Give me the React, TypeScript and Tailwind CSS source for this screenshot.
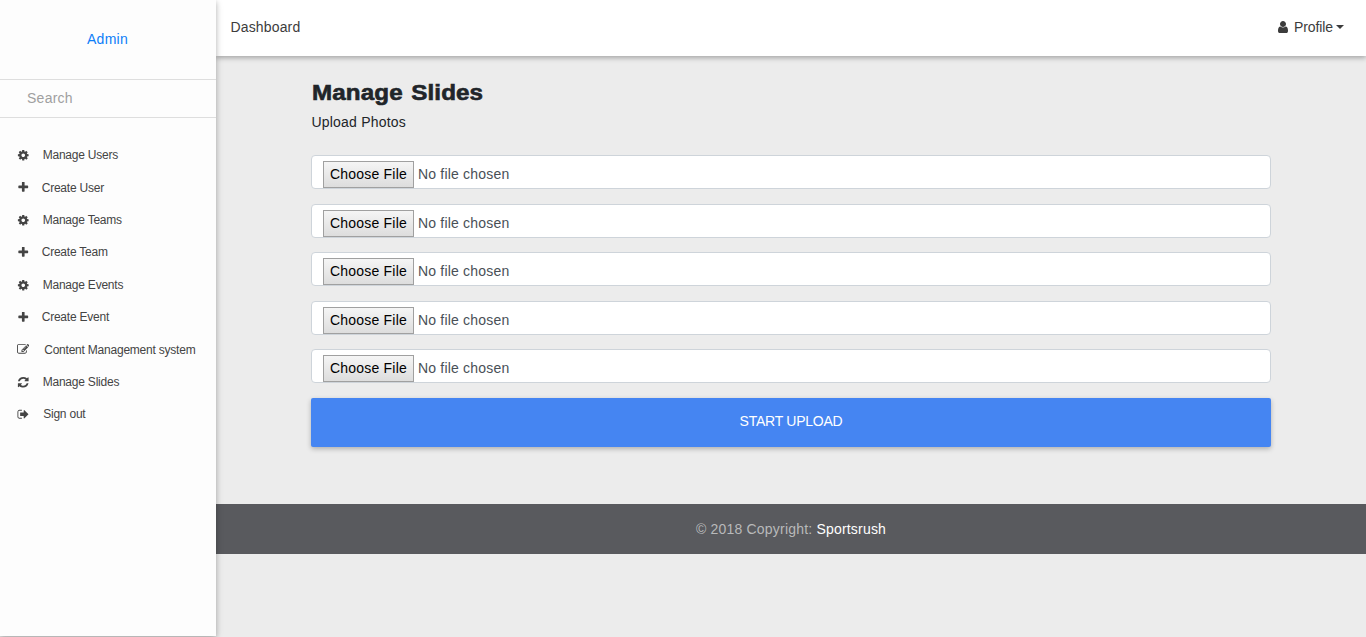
import React from "react";

const paths = {
  cog: "M1152 896q0-106-75-181t-181-75-181 75-75 181 75 181 181 75 181-75 75-181zm512-109v222q0 12-8 23t-20 13l-185 28q-19 54-39 91 35 50 107 138 10 12 10 25t-9 23q-27 37-99 108t-94 71q-12 0-26-9l-138-108q-44 23-91 38-16 136-29 186-7 28-36 28h-222q-14 0-24.5-8.5t-11.5-21.5l-28-184q-49-16-90-37l-141 107q-10 9-25 9-14 0-25-11-126-114-165-168-7-10-7-23 0-12 8-23 15-21 51-66.5t54-70.5q-27-50-41-99l-183-27q-13-2-21-12.5t-8-23.5v-222q0-12 8-23t19-13l186-28q14-46 39-92-40-57-107-138-10-12-10-24 0-10 9-23 26-36 98.5-107.5t94.5-71.5q13 0 26 10l138 107q44-23 91-38 16-136 29-186 7-28 36-28h222q14 0 24.5 8.5t11.5 21.5l28 184q49 16 90 37l142-107q9-9 24-9 13 0 25 10 129 119 165 170 7 8 7 22 0 12-8 23-15 21-51 66.5t-54 70.5q26 50 41 98l183 28q13 2 21 12.5t8 23.5z",
  plus: "M1600 736v192q0 40-28 68t-68 28h-416v416q0 40-28 68t-68 28h-192q-40 0-68-28t-28-68v-416h-416q-40 0-68-28t-28-68v-192q0-40 28-68t68-28h416v-416q0-40 28-68t68-28h192q40 0 68 28t28 68v416h416q40 0 68 28t28 68z",
  edit: "M888 1184l116-116-152-152-116 116v56h96v96h56zm440-720q-16-16-33 1l-350 350q-17 17-1 33t33-1l350-350q17-17 1-33zm80 594v190q0 119-84.5 203.5t-203.5 84.5h-832q-119 0-203.5-84.5t-84.5-203.5v-832q0-119 84.5-203.5t203.5-84.5h832q63 0 117 25 15 7 18 23 3 17-9 29l-49 49q-14 14-32 8-23-6-45-6h-832q-66 0-113 47t-47 113v832q0 66 47 113t113 47h832q66 0 113-47t47-113v-126q0-13 9-22l64-64q15-15 35-7t20 29zm-96-738l288 288-672 672h-288v-288zm444 132l-92 92-288-288 92-92q28-28 68-28t68 28l152 152q28 28 28 68t-28 68z",
  refresh: "M1639 1056q0 5-1 7-64 268-268 434.5t-478 166.5q-146 0-282.5-55t-243.5-157l-129 129q-19 19-45 19t-45-19-19-45v-448q0-26 19-45t45-19h448q26 0 45 19t19 45-19 45l-137 137q71 66 161 102t187 36q134 0 250-65t186-179q11-17 53-117 8-23 30-23h192q13 0 22.5 9.5t9.5 22.5zm25-800v448q0 26-19 45t-45 19h-448q-26 0-45-19t-19-45 19-45l138-138q-148-137-349-137-134 0-250 65t-186 179q-11 17-53 117-8 23-30 23h-199q-13 0-22.5-9.5t-9.5-22.5v-7q65-268 270-434.5t480-166.5q146 0 284 55.5t245 156.5l130-129q19-19 45-19t45 19 19 45z",
  signOut: "M704 1440q0 4 1 20t.5 26.5-3 23.5-10 19.5-20.5 6.5h-320q-119 0-203.5-84.5t-84.5-203.5v-704q0-119 84.5-203.5t203.5-84.5h320q13 0 22.5 9.5t9.5 22.5q0 4 1 20t.5 26.5-3 23.5-10 19.5-20.5 6.5h-320q-66 0-113 47t-47 113v704q0 66 47 113t113 47h312l11.5 1 11.5 3 8 5.5 7 9 2 13.5zm928-544q0 26-19 45l-544 544q-19 19-45 19t-45-19-19-45v-288h-448q-26 0-45-19t-19-45v-384q0-26 19-45t45-19h448v-288q0-26 19-45t45-19 45 19l544 544q19 19 19 45z",
  user: "M1536 1399q0 109-62.5 187t-150.5 78h-854q-88 0-150.5-78t-62.5-187q0-85 8.5-160.5t31.5-152 58.5-131 94-89 134.5-34.5q131 128 313 128t313-128q76 0 134.5 34.5t94 89 58.5 131 31.5 152 8.5 160.5zm-256-887q0 159-112.5 271.5t-271.5 112.5-271.5-112.5-112.5-271.5 112.5-271.5 271.5-112.5 271.5 112.5 112.5 271.5z",
};

type IconName = keyof typeof paths;

function Icon({ name, className }: { name: IconName; className: string }) {
  return (
    <svg viewBox="0 0 1792 1792" fill="currentColor" className={className}>
      <path d={paths[name]} />
    </svg>
  );
}

const menu: { icon: IconName; label: string; gap: string }[] = [
  { icon: "cog", label: "Manage Users", gap: "ml-[13.5px]" },
  { icon: "plus", label: "Create User", gap: "ml-[12.5px]" },
  { icon: "cog", label: "Manage Teams", gap: "ml-[13.5px]" },
  { icon: "plus", label: "Create Team", gap: "ml-[12.5px]" },
  { icon: "cog", label: "Manage Events", gap: "ml-[13.5px]" },
  { icon: "plus", label: "Create Event", gap: "ml-[12.5px]" },
  { icon: "edit", label: "Content Management system", gap: "ml-[15px]" },
  { icon: "refresh", label: "Manage Slides", gap: "ml-[13.5px]" },
  { icon: "signOut", label: "Sign out", gap: "ml-[14px]" },
];

function FileField() {
  return (
    <div className="flex h-[34px] items-start rounded-[4px] border border-[#ced4da] bg-white pl-[11px] pt-[5px]">
      <button className="h-[27px] w-[91px] shrink-0 whitespace-nowrap border border-[#a0a0a0] bg-linear-to-b from-[#f5f5f5] to-[#dddddd] text-[14px] leading-[25px] tracking-[0.2px] text-black">
        Choose File
      </button>
      <span className="ml-1 text-[14px] leading-[27px] tracking-[0.19px] text-[#495057]">No file chosen</span>
    </div>
  );
}

export default function App() {
  return (
    <div className="flex h-[637px] w-full overflow-hidden bg-[#ececec] font-['Liberation_Sans',Arial,sans-serif] text-[14px] text-[#212529]">
      <aside className="relative z-10 h-[636px] w-[216px] shrink-0 bg-[#fdfdfd] shadow-[0_2px_5px_0_rgba(0,0,0,0.2),0_2px_8px_0_rgba(0,0,0,0.14)]">
        <div className="flex h-[79px] items-center justify-center pr-px text-[#0d7ef8] tracking-[0.26px]">Admin</div>
        <div className="flex h-[39px] items-center border-y border-[#dedede] pl-[27px] tracking-[0.26px] text-[#a0a0a0]">Search</div>
        <nav className="pt-[21px] text-[#444444]">
          {menu.map((item) => (
            <a key={item.label} className="flex h-[32.4px] items-center pl-[16.7px] text-[12px]">
              <Icon name={item.icon} className="size-[12.5px] shrink-0" />
              <span className={`${item.gap} whitespace-nowrap tracking-[-0.22px]`}>{item.label}</span>
            </a>
          ))}
        </nav>
      </aside>
      <div className="flex min-w-0 flex-1 flex-col">
        <header className="flex h-[56px] shrink-0 items-center justify-between bg-white pb-[2px] pl-[14.5px] pr-[22px] text-[#3c3c3c] shadow-[0_2px_5px_0_rgba(0,0,0,0.3)]">
          <span className="tracking-[0.15px]">Dashboard</span>
          <span className="flex items-center">
            <Icon name="user" className="size-[14px]" />
            <span className="ml-[4px] tracking-[-0.1px]">Profile</span>
            <span className="ml-[3px] border-x-4 border-t-4 border-x-transparent border-t-[#3c3c3c]" />
          </span>
        </header>
        <main className="h-[448px] shrink-0 px-[95px] pt-[23px]">
          <h1 className="ml-px h-[28px] w-fit origin-left scale-x-110 whitespace-nowrap text-[22px] font-bold leading-[28px] tracking-[0.1px] [word-spacing:1.5px] [-webkit-text-stroke:0.6px_#212529]">Manage Slides</h1>
          <p className="mt-[5px] h-[20px] pl-[0.5px] leading-[20px] tracking-[0.2px]">Upload Photos</p>
          <div className="mt-[23px] flex flex-col gap-[14.5px]">
            {[1, 2, 3, 4, 5].map((slot) => (
              <FileField key={slot} />
            ))}
          </div>
          <button className="mt-[15px] flex h-[49px] w-full items-center justify-center rounded-[2px] bg-[#4585f2] pb-[3px] text-[14px] tracking-[-0.25px] text-white shadow-[0_2px_5px_0_rgba(0,0,0,0.26)]">
            START UPLOAD
          </button>
        </main>
        <footer className="flex h-[50px] shrink-0 items-center justify-center bg-[#595a5e] tracking-[0.2px] text-[#b8b9ba]">
          <span>© 2018 Copyright:</span>
          <span className="ml-1 text-white">Sportsrush</span>
        </footer>
      </div>
    </div>
  );
}
